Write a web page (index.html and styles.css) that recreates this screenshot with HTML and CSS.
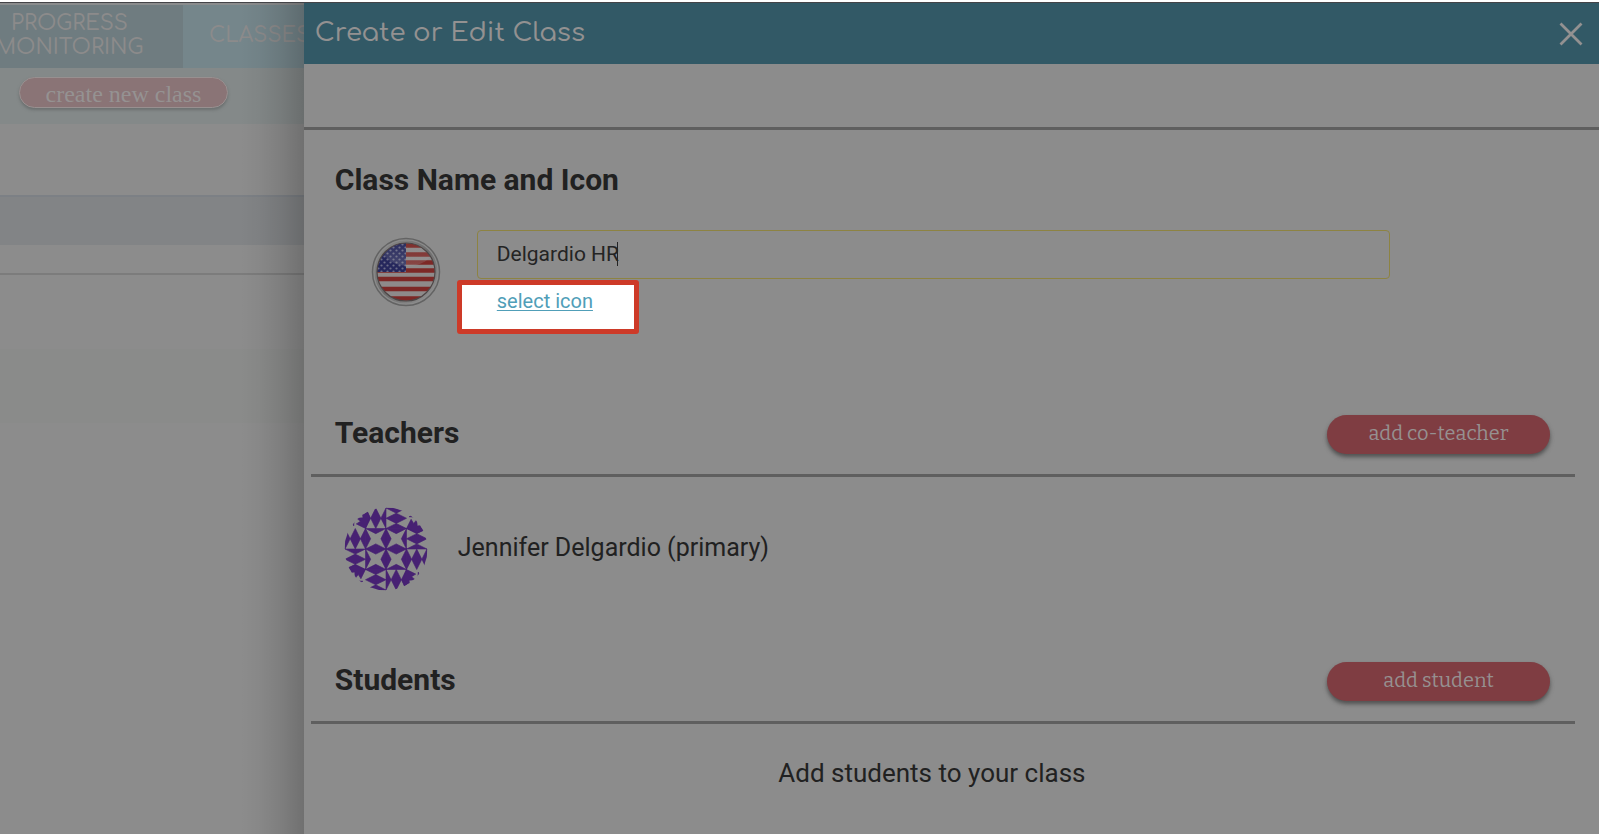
FILE: index.html
```
<!DOCTYPE html>
<html lang="en">
<head>
<meta charset="utf-8">
<title>Create or Edit Class</title>
<link rel="stylesheet" href="styles.css">
</head>
<body>
<div class="app">
  <div class="page">
    <nav class="tabs">
      <a class="tab tab-progress" href="#">PROGRESS<br>MONITORING</a>
      <a class="tab tab-classes" href="#">CLASSES</a>
    </nav>
    <div class="toolbar"><button class="create" type="button">create new class</button></div>
    <div class="row-space"></div>
    <div class="row-head"></div>
    <div class="row-gap"></div>
    <div class="row-plain"></div>
    <div class="row-stripe"></div>
  </div>
  <main class="drawer">
    <header class="drawer-head">
      <h1 class="drawer-title">Create or Edit Class</h1>
      <button class="close" type="button" aria-label="Close">
        <svg width="24" height="24" viewBox="0 0 24 24"><path d="M1.500 1.500 22.500 22.500M22.500 1.500 1.500 22.500" stroke="currentColor" stroke-width="2.800" fill="none"/></svg>
      </button>
    </header>
    <div class="drawer-bar"></div>

    <section class="name-section">
      <h2 class="heading"><label for="class-name">Class Name and Icon</label></h2>
      <div class="name-row">
        <svg class="flag" width="70" height="70" viewBox="0 0 70 70" aria-hidden="true">
          <defs>
            <linearGradient id="ring" x1="0" y1="0" x2="1" y2="1">
              <stop offset="0" stop-color="#8c8c8c"/><stop offset=".5" stop-color="#6c6c6c"/><stop offset="1" stop-color="#929292"/>
            </linearGradient>
            <linearGradient id="gloss" x1="0" y1="0" x2="0" y2="1">
              <stop offset="0" stop-color="#999" stop-opacity="0"/><stop offset="1" stop-color="#aaa" stop-opacity=".25"/>
            </linearGradient>
            <pattern id="stars" width="6" height="6" patternUnits="userSpaceOnUse">
              <circle cx="1.500" cy="1.500" r="1.100" fill="#6c6d88"/><circle cx="4.500" cy="4.500" r="1.100" fill="#6c6d88"/>
            </pattern>
            <clipPath id="disc"><circle cx="35" cy="35" r="29"/></clipPath>
          </defs>
          <circle cx="35" cy="35" r="33.500" fill="#8b8b8b" stroke="#636363" stroke-width="1.500"/>
          <circle cx="35" cy="35" r="30" fill="none" stroke="url(#ring)" stroke-width="3"/>
          <g clip-path="url(#disc)">
            <rect x="6" y="6" width="58" height="58" fill="#8e8a8a"/>
            <path d="M6 8.500h58M6 17.500h58M6 25.500h58M6 33.500h58M6 42h58M6 52h58M6 61.500h58" stroke="#7d2826" stroke-width="4.500"/>
            <rect x="6" y="6" width="29" height="29" fill="#25275c"/>
            <rect x="6" y="6" width="29" height="29" fill="url(#stars)"/>
            <ellipse cx="37" cy="14" rx="24" ry="15" fill="url(#gloss)"/>
          </g>
          <circle cx="35" cy="35" r="29" fill="none" stroke="#4d4646" stroke-width="1.200"/>
        </svg>
        <div class="name-fields">
          <div class="name-box">
            <input class="name-input" id="class-name" type="text" value="Delgardio HR">
            <span class="caret"></span>
          </div>
          <div class="spotlight"><a class="select-icon" href="#">select icon</a></div>
        </div>
      </div>
    </section>

    <section class="group teachers">
      <div class="group-head">
        <h2 class="heading">Teachers</h2>
        <button class="add" type="button">add co-teacher</button>
      </div>
      <div class="teacher">
        <svg class="avatar" width="84" height="84" viewBox="-8.200 -8.200 16.400 16.400" aria-hidden="true">
          <defs>
            <clipPath id="round"><circle r="8.100"/></clipPath>
            <g id="quarter">
              <path d="M-4-4H0L-2-3ZM0-4V0L-1-2ZM0 0H-4L-2-1ZM-4 0V-4L-3-2Z"/>
              <path d="M-2-8-1-6-2-4-3-6ZM0-8V-4L-1-6ZM-4-8V-4L-3-6Z"/>
              <path d="M0-8H4L2-7ZM0-6 2-7 4-6 2-5ZM0-4H4L2-5Z"/>
              <path d="M-4-4-5.800-4.900-5-5.400-5.700-6-4.500-6.100-4.600-6.900-3.700-7.400-3.200-6.200ZM-6.800-5.600-6.200-5.800-6.300-4.500Z"/>
            </g>
          </defs>
          <g clip-path="url(#round)" fill="#472173" stroke="#472173" stroke-width=".12">
            <use href="#quarter"/><use href="#quarter" transform="rotate(90)"/><use href="#quarter" transform="rotate(180)"/><use href="#quarter" transform="rotate(270)"/>
          </g>
        </svg>
        <span class="teacher-name">Jennifer Delgardio (primary)</span>
      </div>
    </section>

    <section class="group">
      <div class="group-head">
        <h2 class="heading">Students</h2>
        <button class="add" type="button">add student</button>
      </div>
      <p class="empty">Add students to your class</p>
    </section>
  </main>
</div>
</body>
</html>
```
FILE: styles.css
```
* { box-sizing: border-box; }
body {
  margin: 0;
  padding: 2px 3px 0 0;
  background: #fff;
  font-family: Roboto, "Liberation Sans", sans-serif;
  color: #212121;
}
.app {
  display: grid;
  grid-template-columns: minmax(0, 19fr) minmax(0, 81fr);
  min-height: calc(100vh - 2px);
  border-top: 1px solid #444448;
  background: #8c8c8c;
  overflow: hidden;
}
button { border: 0; padding: 0; font: inherit; color: inherit; background: none; }
h1, h2, p { margin: 0; }

/* Dimmed page behind the drawer */
.page { min-width: 0; }
.tabs {
  display: flex;
  height: 65px;
  border-top: 2px solid #8a8c8d;
  font: 500 21px/24px Comfortaa, Lato, sans-serif;
  color: #8c8b8b;
}
.tab {
  display: flex;
  align-items: center;
  min-width: 0;
  padding-bottom: 4px;
  color: inherit;
  text-decoration: none;
  white-space: nowrap;
}
.tab-progress {
  flex: 0 0 183px;
  justify-content: center;
  padding-right: 44px;
  text-align: center;
  background: #6f7c80;
}
.tab-classes { flex: 1; padding-left: 26px; background: #75868b; }
.toolbar { height: 56px; padding: 9px 19px; background: #848989; }
.create {
  width: 209px;
  height: 31px;
  padding-top: 3px;
  border: 1px solid #989090;
  border-radius: 16px;
  background: #8a7476;
  box-shadow: 0 2px 3px #6c7070;
  color: #959292;
  font: 24px/26px "Liberation Serif", serif;
}
.row-space { height: 71px; }
.row-head { height: 50px; border-top: 2px solid #7c8085; background: #828486; }
.row-gap { height: 30px; border-bottom: 2px solid #7c7c7c; }
.row-plain { height: 74px; }
.row-stripe { height: 74px; background: #8a8b8a; }

/* Drawer */
.drawer {
  position: relative;
  background: #8c8c8c;
}
.drawer::before {
  content: "";
  position: absolute;
  top: 0;
  bottom: 0;
  right: 100%;
  width: 64px;
  background: linear-gradient(to left, rgba(0, 0, 0, .2), rgba(0, 0, 0, .1) 35%, rgba(0, 0, 0, .03) 70%, transparent);
  pointer-events: none;
}
.drawer-head {
  display: flex;
  align-items: center;
  justify-content: space-between;
  height: 61px;
  padding: 0 16px 0 11px;
  background: #325966;
  color: #939191;
}
.drawer-title { padding-bottom: 2px; font: 500 26px/32px Comfortaa, Lato, sans-serif; }
.close { display: flex; }
.drawer-bar { height: 66px; border-bottom: 3px solid #5f5f5f; }
.heading { font-size: 30px; line-height: 36px; font-weight: 700; }
.name-section { padding: 32px 31px 0; }
.name-row { display: flex; gap: 36px; padding: 32px 178px 0 36px; }
.flag { flex: none; margin-top: 7px; }
.name-fields { flex: 1; min-width: 0; }
.name-box { position: relative; }
.name-input {
  display: block;
  width: 100%;
  height: 49px;
  padding: 0 19px 2px;
  border: 1px solid #8d8342;
  border-radius: 4px;
  outline: 0;
  background: transparent;
  font: 21px/24px Roboto, sans-serif;
  color: #242424;
}
.caret {
  position: absolute;
  top: 12px;
  left: 140px;
  width: 1px;
  height: 24px;
  background: #242424;
}
.spotlight {
  width: 182px;
  height: 54px;
  margin: 1px 0 0 -20px;
  padding: 4px 35px;
  border: 5px solid #cd3a28;
  border-radius: 3px;
  background: #fff;
  font-size: 20px;
  line-height: 24px;
}
.select-icon { color: #509eb8; text-underline-offset: 2px; text-decoration-thickness: 1px; }

.group { padding: 0 24px 0 7px; }
.teachers { padding-top: 77px; }
.group-head {
  display: flex;
  align-items: flex-start;
  justify-content: space-between;
  height: 66px;
  padding: 4px 25px 0 24px;
  border-bottom: 3px solid #5f5f5f;
}
.add {
  width: 223px;
  height: 39px;
  padding-bottom: 4px;
  border-radius: 20px;
  background: #7f3d42;
  box-shadow: 0 3px 4px #505050;
  color: #969090;
  font: 20px/24px Bitter, "DejaVu Serif", serif;
}
.teacher {
  display: flex;
  align-items: center;
  gap: 30px;
  height: 181px;
  padding: 0 33px 38px;
}
.teacher-name { padding-bottom: 2px; font-size: 25px; line-height: 32px; }
.empty { padding: 33px 22px 24px 0; font-size: 26px; line-height: 32px; text-align: center; }
```
